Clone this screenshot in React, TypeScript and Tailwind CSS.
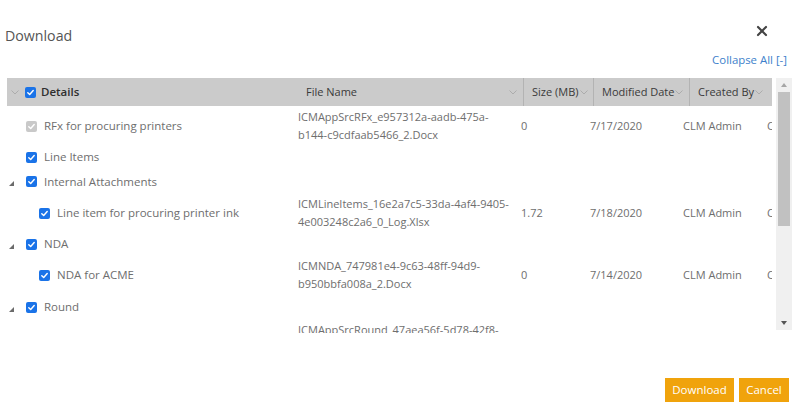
import { X } from "lucide-react"

type Row = {
  label: string
  h: number
  indent?: boolean
  group?: boolean
  disabled?: boolean
  file?: [string, string]
  size?: string
  date?: string
  by?: string
}

const rows: Row[] = [
  {
    label: "RFx for procuring printers",
    h: 40,
    disabled: true,
    file: ["ICMAppSrcRFx_e957312a-aadb-475a-", "b144-c9cdfaab5466_2.Docx"],
    size: "0",
    date: "7/17/2020",
    by: "CLM Admin",
  },
  { label: "Line Items", h: 22 },
  { label: "Internal Attachments", h: 27, group: true },
  {
    label: "Line item for procuring printer ink",
    h: 36,
    indent: true,
    file: ["ICMLineItems_16e2a7c5-33da-4af4-9405-", "4e003248c2a6_0_Log.Xlsx"],
    size: "1.72",
    date: "7/18/2020",
    by: "CLM Admin",
  },
  { label: "NDA", h: 26, group: true },
  {
    label: "NDA for ACME",
    h: 36,
    indent: true,
    file: ["ICMNDA_747981e4-9c63-48ff-94d9-", "b950bbfa008a_2.Docx"],
    size: "0",
    date: "7/14/2020",
    by: "CLM Admin",
  },
  { label: "Round", h: 28, group: true },
  {
    label: "",
    h: 36,
    indent: true,
    file: ["ICMAppSrcRound_47aea56f-5d78-42f8-", "a1c3-77bd1e2f0c4a_2.Docx"],
    size: "0",
    date: "7/14/2020",
    by: "CLM Admin",
  },
]

function Check({ disabled }: { disabled?: boolean }) {
  return (
    <span
      className={`flex h-[11px] w-[11px] shrink-0 items-center justify-center rounded-[2px] ${
        disabled ? "bg-[#c9c9c9]" : "bg-[#1a73e8]"
      }`}
    >
      <svg viewBox="0 0 10 10" className="h-[9px] w-[9px]">
        <path d="M2 5.2 L4.1 7.2 L8 2.8" fill="none" stroke="#fff" strokeWidth="1.6" strokeLinecap="round" strokeLinejoin="round" />
      </svg>
    </span>
  )
}

function Chevron() {
  return (
    <svg viewBox="0 0 8 5" className="h-[5px] w-[8px] shrink-0">
      <path d="M0.5 0.5 L4 4 L7.5 0.5" fill="none" stroke="#a8a8a8" strokeWidth="0.9" />
    </svg>
  )
}

function Triangle() {
  return (
    <svg viewBox="0 0 5 5" className="h-[5px] w-[5px]">
      <path d="M5 0 L5 5 L0 5 Z" fill="#6b6b6b" />
    </svg>
  )
}

export default function App() {
  return (
    <div className="relative flex h-[407px] w-[800px] flex-col overflow-hidden bg-white font-['Open_Sans',sans-serif]">
      <div className="flex h-[70px] items-start justify-between pl-[5px] pr-[30px] pt-[25px]">
        <div className="text-[14.2px] text-[#555]">Download</div>
        <X className="mt-[-2px] h-[16px] w-[16px] text-[#444]" strokeWidth={3.2} />
      </div>
      <div className="mt-[-18px] flex justify-end pr-[13px] text-[11.4px] leading-[16px] text-[#3d7fcb]">
        Collapse All [-]
      </div>

      <div className="mt-[10px] flex pl-[7px]">
        <div className="w-[765px] shrink-0 overflow-hidden">
          <div className="flex h-[28px] items-center whitespace-nowrap bg-[#cbcbcb] text-[11px] text-[#3a3a3a]">
            <div className="flex w-[291px] shrink-0 items-center gap-[4px] pl-[4px]">
              <Chevron />
              <span className="ml-[2px]">
                <Check />
              </span>
              <span className="ml-[1px] text-[11.5px] font-semibold text-[#2e2e2e]">Details</span>
            </div>
            <div className="flex h-full w-[226px] shrink-0 items-center justify-between border-r border-[#b3b3b3] pl-[8px] pr-[6px]">
              <span>File Name</span>
              <Chevron />
            </div>
            <div className="flex h-full w-[70px] shrink-0 items-center gap-[1px] border-r border-[#b3b3b3] pl-[8px]">
              <span>Size (MB)</span>
              <Chevron />
            </div>
            <div className="flex h-full w-[96px] shrink-0 items-center gap-[1px] border-r border-[#b3b3b3] pl-[8px]">
              <span>Modified Date</span>
              <Chevron />
            </div>
            <div className="flex h-full w-[82px] shrink-0 items-center gap-[1px] pl-[8px]">
              <span>Created By</span>
              <Chevron />
            </div>
          </div>

          <div className="h-[227px] overflow-hidden text-[11px] text-[#6e6e6e]">
            {rows.map((r, i) => (
              <div key={i} className="flex items-center whitespace-nowrap" style={{ height: r.h }}>
                <div className="flex w-[291px] shrink-0 items-center">
                  <span className="flex w-[19px] shrink-0 justify-end pr-[12px] pt-[4px]">
                    {r.group && <Triangle />}
                  </span>
                  {r.label && (
                    <span className={`flex items-center gap-[7px] ${r.indent ? "pl-[13px]" : ""}`}>
                      <Check disabled={r.disabled} />
                      <span className="text-[11.5px]">{r.label}</span>
                    </span>
                  )}
                </div>
                <div className="w-[223px] shrink-0 leading-[18px]">
                  {r.file && (
                    <>
                      <div>{r.file[0]}</div>
                      <div>{r.file[1]}</div>
                    </>
                  )}
                </div>
                <div className="w-[69px] shrink-0">{r.size}</div>
                <div className="w-[93px] shrink-0">{r.date}</div>
                <div className="w-[84px] shrink-0">{r.by}</div>
                <div className="w-[60px] shrink-0">{r.by}</div>
              </div>
            ))}
          </div>
        </div>

        <div className="ml-[4px] flex h-[252px] w-[16px] shrink-0 flex-col items-center bg-[#f0f0f0]">
          <div className="flex h-[14px] items-center">
            <svg viewBox="0 0 6 4" className="h-[4px] w-[6px]">
              <path d="M0 4 L3 0 L6 4 Z" fill="#a6a6a6" />
            </svg>
          </div>
          <div className="h-[134px] w-[12px] bg-[#c1c1c1]" />
          <div className="flex-1" />
          <div className="flex h-[14px] items-center">
            <svg viewBox="0 0 6 4" className="h-[4px] w-[6px]">
              <path d="M0 0 L6 0 L3 4 Z" fill="#555" />
            </svg>
          </div>
        </div>
      </div>

      <div className="flex flex-1 items-end justify-end gap-[5px] pb-[5px] pr-[11px]">
        <button className="h-[24px] w-[69px] bg-[#f0a30c] text-[11.5px] text-white">Download</button>
        <button className="h-[24px] w-[50px] bg-[#f0a30c] text-[11.5px] text-white">Cancel</button>
      </div>
    </div>
  )
}
